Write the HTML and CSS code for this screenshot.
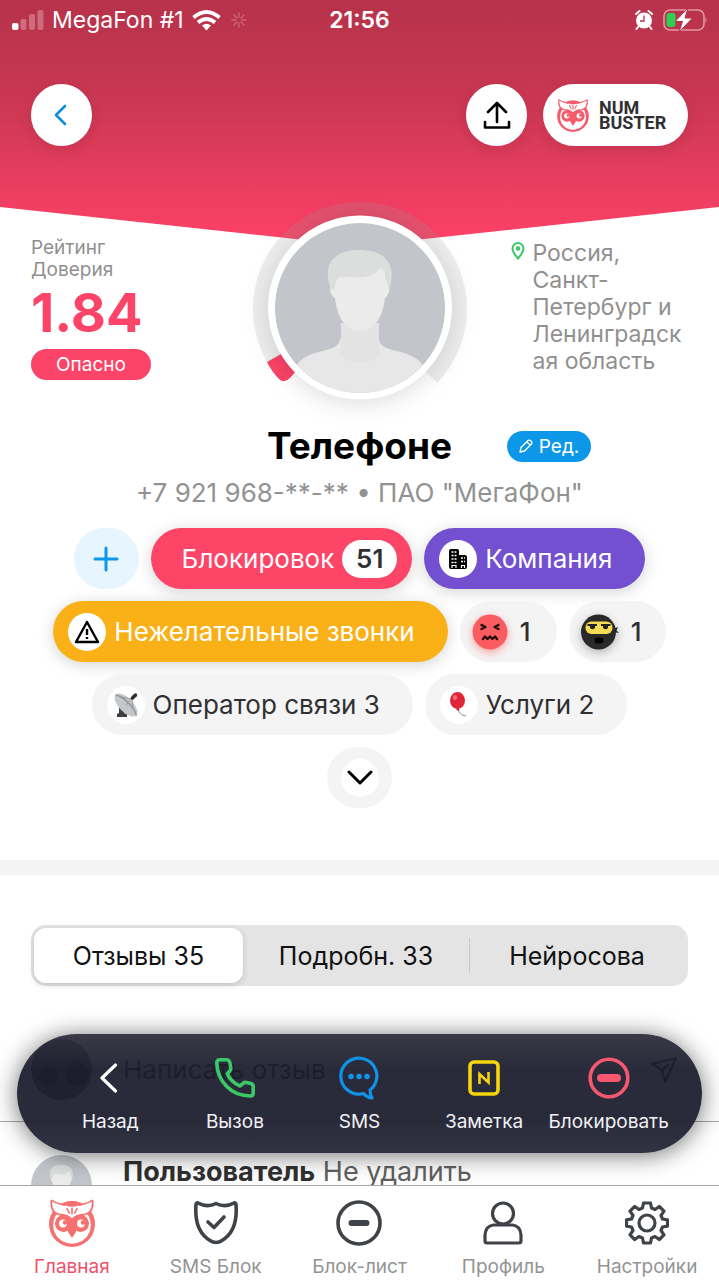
FILE: index.html
```html
<!DOCTYPE html>
<html lang="ru">
<head>
<meta charset="utf-8">
<meta name="viewport" content="width=device-width, initial-scale=1">
<title>NumBuster</title>
<link rel="stylesheet" href="styles.css">
</head>
<body>
<svg class="defs" aria-hidden="true">
  <symbol id="owl" viewBox="0 0 46 48">
    <circle cx="23" cy="25" r="23" fill="currentColor"/>
    <circle cx="23" cy="26" r="18.800" fill="#fff"/>
    <path d="M2 .5C6 5 11 5 16 6.500h14C35 5 40 5 44 .5 45.500 8 43 14 36 15.500c-6 0-10 1-13 4.500C20 16.500 16 15.500 10 15.500 3 14 .5 8 2 .5Z" fill="#fff"/>
    <path d="M2.500 1C1.500 9 4 14 10 15.500q9 .5 13 5 4-4.500 13-5C42 14 44.500 9 43.500 1" fill="none" stroke="currentColor" stroke-width="1.800"/>
    <path d="M2.500 1C7 5 12 4.500 16 6.500M43.500 1C39 5 34 4.500 30 6.500" fill="none" stroke="currentColor" stroke-width="1.600"/>
    <path d="M12 5Q23-1 34 5 29 6 26 7.500H20Q17 6 12 5Z" fill="currentColor"/>
    <path d="M18 9.500l2.200 4.500M23 9v6M28 9.500l-2.200 4.500" stroke="currentColor" stroke-width="1.600" stroke-linecap="round"/>
    <circle cx="14.500" cy="24.500" r="8.500" fill="currentColor"/><circle cx="31.500" cy="24.500" r="8.500" fill="currentColor"/>
    <path d="M19 19h8v14l-4 6-4-6z" fill="currentColor"/>
    <circle cx="14" cy="24.500" r="3.900" fill="#fff"/><circle cx="32" cy="24.500" r="3.900" fill="#fff"/>
    <circle cx="16" cy="23.500" r="2.200" fill="currentColor"/><circle cx="34" cy="23.500" r="2.200" fill="currentColor"/>
  </symbol>
  <symbol id="person" viewBox="0 0 170 170">
    <clipPath id="disc"><circle cx="85" cy="85" r="85"/></clipPath>
    <g clip-path="url(#disc)">
      <rect width="170" height="170" fill="#c2c6ca"/>
      <path d="M17 170c0-24 4-33 20-39 15-5 27-5 28-15h39c1 10 13 10 28 15 16 6 21 15 21 39z" fill="#e7e7e7"/>
      <path d="M66 100h38v28c0 15-38 15-38 0z" fill="#e4e3e3"/>
      <path d="M59 57c0-16 11-21 26-21s26 5 26 21c6 2 4 15-1 18-2 18-10 33-25 33S62 93 60 75c-6-3-7-16-1-18z" fill="#ebebeb"/>
      <path d="M56 67C46 40 60 27 84 27c28 0 38 15 30 41l-4-18-4-6C94 61 74 51 64 55c-3 2-4 5-4 11z" fill="#dcdddd"/>
    </g>
  </symbol>
</svg>

<div class="screen">
  <main class="content">
    <header class="top">
      <div class="status">
        <div class="status-side">
          <svg width="32" height="20" viewBox="0 0 32 20" fill="#fff"><rect y="13" width="6.500" height="7" rx="2"/><g opacity=".28"><rect x="8.500" y="9" width="6" height="11" rx="2"/><rect x="17" y="4" width="6" height="16" rx="2"/><rect x="25.500" y="0" width="6" height="20" rx="2"/></g></svg>
          <span>MegaFon #1</span>
          <svg class="wifi" width="29" height="21" viewBox="0 0 29 21" fill="none" stroke="#fff" stroke-width="3.800"><path d="M1.500 7.500Q14.500-3.500 27.500 7.500"/><path d="M6 12.500Q14.500 5.500 23 12.500"/><path d="M10 15.500Q14.500 12 19 15.500L14.500 20.500z" fill="#fff" stroke="none"/></svg>
          <svg class="spinner" width="16" height="16" viewBox="0 0 16 16" stroke="#fff" stroke-width="1.300" stroke-linecap="round"><path d="M8 1v4M8 11v4M1 8h4M11 8h4M3 3l3 3M10 10l3 3M3 13l3-3M10 6l3-3"/></svg>
        </div>
        <time>21:56</time>
        <div class="status-side status-end">
          <svg width="18" height="20" viewBox="0 0 18 20"><circle cx="9" cy="10.500" r="8" fill="#fff"/><path d="M3 17l-1.500 2M15 17l1.500 2M1 4l3.500-3M17 4l-3.500-3" stroke="#fff" stroke-width="2" stroke-linecap="round"/><path d="M9 5.500v5.500H5" fill="none" stroke="#b8324a" stroke-width="1.300"/></svg>
          <svg width="44" height="24" viewBox="0 0 44 24"><rect x="1" y="2" width="40" height="20" rx="6" fill="none" stroke="#e497a4" stroke-width="1.600"/><rect x="3.500" y="5" width="9" height="14" rx="3" fill="#2bd153"/><path d="M42.500 9v6q2-3 0-6z" fill="#e497a4"/><path d="M25 0L12 13.500h7.500L16 24l13.500-14H22z" fill="#fff" stroke="#b8324a" stroke-width="1"/></svg>
        </div>
      </div>
      <div class="toolbar">
        <button class="round" aria-label="Назад"><svg width="16" height="22" viewBox="0 0 16 22" fill="none" stroke="#0c8fdc" stroke-width="2.600" stroke-linecap="round" stroke-linejoin="round"><path d="M11 2L2 11l9 9"/></svg></button>
        <button class="round push" aria-label="Поделиться"><svg width="28" height="30" viewBox="0 0 28 30" fill="none" stroke="#000" stroke-width="2.600" stroke-linecap="round" stroke-linejoin="round"><path d="M14 22V3M5 12l9-9 9 9M2 22v5.500h24V22"/></svg></button>
        <a class="brand" href="#"><svg class="owl" width="32" height="33"><use href="#owl"/></svg><span class="wordmark">NUM BUSTER</span></a>
      </div>
    </header>

    <section class="profile">
      <div class="rating">
        <div class="caption">Рейтинг<br>Доверия</div>
        <div class="score">1.84</div>
        <div class="badge">Опасно</div>
      </div>
      <svg class="photo" width="214" height="214" viewBox="-107 -107 214 214">
        <path d="M-84 48.500A97 97 0 1 1 70 67" fill="none" stroke="#a0a0a030" stroke-width="20"/>
        <path d="M-93 53L-79 45L-62 60L-70 69Q-76 75-81 70-88 63-93 53Z" fill="#fb4467"/>
        <circle class="photo-rim" cy="-1.500" r="92" fill="#fff"/>
        <use href="#person" x="-85" y="-86" width="170" height="170"/>
      </svg>
      <div class="place">
        <svg width="14" height="18" viewBox="0 0 14 18" fill="none" stroke="#36c864" stroke-width="2"><path d="M7 16.500C4 13 1.500 10 1.500 6.500a5.500 5.500 0 0 1 11 0C12.500 10 10 13 7 16.500z"/><circle cx="7" cy="6.500" r="1.300"/></svg>
        <span>Россия,<br>Санкт-<br>Петербург и<br>Ленинградск<br>ая область</span>
      </div>
    </section>

    <section class="identity">
      <div class="name-row">
        <h1>Телефоне</h1>
        <button class="edit"><svg width="14" height="14" viewBox="0 0 14 14" fill="none" stroke="#fff" stroke-width="1.300" stroke-linejoin="round"><path d="M1 13l1-4.500 7-7q1.500-1 3 .5t.5 3l-7 7zM8 3l3 3"/></svg>Ред.</button>
      </div>
      <p class="number">+7 921 968-**-** • ПАО "МегаФон"</p>
    </section>

    <section class="chips">
      <button class="chip add" aria-label="Добавить"><svg width="26" height="26" viewBox="0 0 26 26" stroke="#0c97e8" stroke-width="3" stroke-linecap="round"><path d="M13 2v22M2 13h22"/></svg></button>
      <button class="chip blocks">Блокировок <b class="count">51</b></button>
      <button class="chip company"><i class="dot"><svg width="22" height="22" viewBox="0 0 22 22"><path d="M2 3q0-2 2-2h6q2 0 2 2v4h6q2 0 2 2v10q0 2-2 2H4q-2 0-2-2z" fill="#000"/><path d="M4.500 4h5M4.500 7.500h5M4.500 11h5M4.500 14.500h5M14 10h4M14 13.500h4" stroke="#fff" stroke-width="1.600" stroke-dasharray="2 1"/><path d="M5 20v-2.500h4V20M14.500 20v-2.500h3V20" fill="none" stroke="#fff" stroke-width="1.200"/></svg></i>Компания</button>
      <button class="chip spam"><i class="dot"><svg width="26" height="24" viewBox="0 0 26 24" fill="none" stroke="#000" stroke-width="2.400" stroke-linejoin="round"><path d="M13 2L24 22H2zM13 9v6M13 17v2"/></svg></i>Нежелательные звонки</button>
      <button class="chip mood"><svg class="face" width="36" height="36" viewBox="0 0 36 36"><circle cx="18" cy="18" r="17.500" fill="#fb5c5f"/><path d="M9.500 11l4 2-4 2M26.500 11l-4 2 4 2M11 25l2-2.500 2.500 2.500 2.500-2.500 2.500 2.500 2.500-2.500 2 2.500" fill="none" stroke="#240c0e" stroke-width="2.400" stroke-linecap="round" stroke-linejoin="round"/></svg>1</button>
      <button class="chip mood"><svg class="face dark" width="38" height="36" viewBox="0 0 38 36"><path d="M32 15l5-2-1.500 3.500L38 19l-6-1z" fill="#222"/><circle cx="17.500" cy="18" r="17.500" fill="#292929"/><rect x="4.500" y="7.500" width="27" height="12.500" rx="6" fill="#f4db52"/><path d="M6.500 11h9.500M20 11h9.500" stroke="#222" stroke-width="2"/><path d="M9 11h5v3q-2.500 2.500-5 0zM22 11h5v3q-2.500 2.500-5 0z" fill="#222"/><rect x="13.500" y="23.500" width="9" height="6" rx="3" fill="#000"/></svg>1</button>
      <button class="chip tag"><i class="dot"><svg width="24" height="26" viewBox="0 0 24 26"><path d="M5 13l6 3-1 5 3 1v3H3v-3l2-1z" fill="#3c4044"/><ellipse cx="12" cy="13" rx="14.500" ry="7" transform="rotate(45 12 13)" fill="#c5c8cb"/><path d="M1.500 3C9 4 20 15 22.500 23.500" fill="none" stroke="#92969b" stroke-width="1.500"/><path d="M12 13l7-8M7 5l11 2M19 17l-1-10" stroke="#94979b" stroke-width="1"/><path d="M18.500 6l3-3" stroke="#2d3033" stroke-width="3.500" stroke-linecap="round"/></svg></i>Оператор связи 3</button>
      <button class="chip tag"><i class="dot"><svg width="20" height="26" viewBox="0 0 20 26"><path d="M9 18c1 3 3 5 8 6" fill="none" stroke="#888" stroke-width="1"/><path d="M9 16l2 2.500-4-.5z" fill="#b51824"/><ellipse cx="8.500" cy="8.500" rx="7.500" ry="8.500" fill="#df2638"/><ellipse cx="6" cy="5.500" rx="2" ry="2.500" fill="#f0707a"/></svg></i>Услуги 2</button>
    </section>
    <div class="expand">
      <button class="chip more" aria-label="Показать ещё"><i class="dot"><svg width="26" height="18" viewBox="0 0 26 18" fill="none" stroke="#000" stroke-width="3" stroke-linecap="round" stroke-linejoin="round"><path d="M2 3l11 11L24 3"/></svg></i></button>
    </div>

    <section class="feed">
      <div class="tabs" role="tablist">
        <button role="tab" aria-selected="true">Отзывы 35</button>
        <button role="tab" aria-selected="false">Подробн. 33</button>
        <button class="ruled" role="tab" aria-selected="false">Нейросова</button>
      </div>
      <label class="composer">
        <svg width="61" height="61" viewBox="0 0 61 61"><circle cx="30.500" cy="30.500" r="30.500" fill="#3c3d46"/><circle cx="18" cy="38" r="10" fill="#000"/><circle cx="46" cy="35" r="12" fill="#000"/></svg>
        <input type="text" placeholder="Написать отзыв" aria-label="Написать отзыв">
        <svg width="28" height="28" viewBox="0 0 28 28" fill="none" stroke="#000" stroke-width="2.400" stroke-linejoin="round"><path d="M2 8l24-6-11 24-3-12zM12 14l7-6"/></svg>
      </label>
      <article class="review">
        <svg width="61" height="61"><use href="#person"/></svg>
        <p><b>Пользователь</b> Не удалить</p>
      </article>
    </section>

    <div class="actions">
      <button><svg width="20" height="32" viewBox="0 0 20 32" fill="none" stroke="#fff" stroke-width="3.200" stroke-linecap="round" stroke-linejoin="round"><path d="M15.500 3L2 16l13.500 13"/></svg>Назад</button>
      <button><svg width="40" height="40" viewBox="0 0 40 40" fill="none" stroke="#3bc967" stroke-width="3.600" stroke-linejoin="round"><path d="M5 1.800h6.500q2.500 0 3.300 2.500l1 5.500q.4 2-1.200 3.500l-2.300 2.400q3.500 8 12.500 12.300l3.300-2.700q1.400-1.200 3.300-.8l4.500 1q2.300.6 2.300 3v6.700q0 2.800-3 2.800Q21 38 11.500 28.300 2 18.500 1.800 5 1.800 1.800 5 1.800z"/></svg>Вызов</button>
      <button><svg width="40" height="44" viewBox="0 0 40 44" fill="none" stroke="#0e93e8" stroke-width="3.200" stroke-linecap="round" stroke-linejoin="round"><path d="M33 42q-6-1-8.500-4.500A18 18 0 1 1 36 28q-2 4-5 6 0 5 2 8z"/><path d="M12 20.500h.1M20 20.500h.1M28 20.500h.1" stroke-width="5.500"/></svg>SMS</button>
      <button><svg width="32" height="36" viewBox="0 0 32 36" fill="none" stroke="#f5d50d" stroke-width="3.600"><rect x="2" y="2" width="28" height="32" rx="4"/><path d="M11.500 24V14l9 8.500V12" stroke-width="2.600"/></svg>Заметка</button>
      <button><svg width="42" height="42" viewBox="0 0 42 42" fill="none" stroke="#f75870" stroke-width="3.600"><circle cx="21" cy="21" r="18.800"/><path d="M13 21h16" stroke-width="8" stroke-linecap="round"/></svg>Блокировать</button>
    </div>
  </main>

  <nav class="tabbar">
    <a class="active" href="#"><svg class="owl" width="46" height="48"><use href="#owl"/></svg>Главная</a>
    <a href="#"><svg width="44" height="44" viewBox="0 0 44 44" fill="none" stroke="#3f4348" stroke-width="3.600" stroke-linecap="round" stroke-linejoin="round"><path d="M4 2q9 5 18 0.500 9 4.500 18-.5 2-.5 2 2 2 26-14 35.500-6 4-12 0Q0 30 2 4q0-2.500 2-2z"/><path d="M14 21l6 5.500L30 16"/></svg>SMS Блок</a>
    <a href="#"><svg width="46" height="46" viewBox="0 0 46 46" fill="none" stroke="#3f4348" stroke-width="3.600"><circle cx="23" cy="23" r="21"/><path d="M15.500 23h15" stroke-width="6" stroke-linecap="round"/></svg>Блок-лист</a>
    <a href="#"><svg width="40" height="44" viewBox="0 0 40 44" fill="none" stroke="#3f4348" stroke-width="3.200" stroke-linejoin="round"><circle cx="20" cy="12.500" r="10.500"/><path d="M10.500 24h19q8 1 8.500 10v6q0 2-2 2H4q-2 0-2-2v-6q.5-9 8.500-10z"/></svg>Профиль</a>
    <a href="#"><svg width="44" height="44" viewBox="-22 -22 44 44" fill="none" stroke="#3f4348" stroke-width="3.200" stroke-linejoin="round"><circle r="8"/><path d="M-3.500-20h7l1 5 3.500 1.500 4.300-3 4.700 4.700-3 4.300 1.500 3.500 5 .8v6.400l-5 .8-1.500 3.500 3 4.300-4.700 4.700-4.300-3-3.500 1.500-1 5h-7l-1-5L-8 13.500l-4.300 3-4.700-4.700 3-4.300L-15.500 4l-5-.8v-6.400l5-.8 1.500-3.500-3-4.300 4.700-4.700 4.300 3 3.500-1.500z"/></svg>Настройки</a>
  </nav>
</div>
</body>
</html>
```

FILE: styles.css
```css
* { box-sizing: border-box; }

body {
  margin: 0;
  background: #fff;
  color: #303033;
  font-family: Inter, "Liberation Sans", sans-serif;
}

button, input { font: inherit; color: inherit; border: 0; padding: 0; background: none; }
button { cursor: pointer; }
a { color: inherit; text-decoration: none; }
svg { display: block; flex: none; }
.defs { position: absolute; width: 0; height: 0; }

.screen { height: 100vh; display: flex; flex-direction: column; }
.content { position: relative; flex: 1; min-height: 0; overflow: hidden; }

/* Header */
.top { position: relative; height: 202px; }
.top::before {
  content: "";
  position: absolute;
  inset: 0 0 auto;
  height: 246px;
  background: linear-gradient(#b6324a, #ca3752 40%, #ff4268);
  clip-path: polygon(0 0, 100% 0, 100% 207px, 50% 100%, 0 207px);
}
.status, .toolbar { position: relative; display: flex; align-items: center; }
.status { height: 40px; padding: 0 12px; color: #fff; font-size: 23px; }
.status time { font-weight: 600; }
.status-side { flex: 1; display: flex; align-items: center; gap: 8px; }
.status-end { justify-content: flex-end; gap: 10px; }
.spinner { opacity: .25; margin-left: 2px; }
.toolbar { padding: 44px 31px 0; gap: 16px; }
.round, .brand {
  height: 62px;
  display: flex;
  align-items: center;
  justify-content: center;
  background: #fff;
  border-radius: 31px;
  box-shadow: 0 4px 14px #00000018;
}
.round { width: 61px; }
.push { margin-left: auto; }
.brand {
  gap: 10px;
  width: 145px;
  padding: 0 22px 0 14px;
  justify-content: flex-start;
  font: 700 18px/15px Roboto, sans-serif;
}
.wordmark { width: min-content; }
.owl { color: #f55b6b; }

/* Rating, photo, location */
.profile {
  position: relative;
  display: grid;
  grid-template-columns: 1fr 214px 1fr;
  padding: 0 31px;
}
.rating { padding-top: 35px; }
.caption { color: #8f8f8f; font-size: 19px; line-height: 22px; }
.score { color: #fb4467; font-size: 54px; line-height: 64px; font-weight: 700; }
.badge {
  width: 120px;
  margin-top: 4px;
  border-radius: 16px;
  background: #fb4467;
  color: #fff;
  font-size: 19px;
  line-height: 31px;
  text-align: center;
}
.photo { overflow: visible; }
.photo-rim { filter: drop-shadow(0 4px 12px #00000022); }
.place {
  display: flex;
  align-items: flex-start;
  gap: 8px;
  padding: 38px 0 0 44px;
  color: #909090;
  font-size: 23px;
  line-height: 27px;
  white-space: nowrap;
}
.place svg { margin-top: 2px; }

/* Name and number */
.name-row {
  display: grid;
  grid-template-columns: 1fr auto 1fr;
  align-items: center;
  margin-top: 6px;
}
.name-row h1 { grid-column: 2; margin: 0; color: #000; font-size: 37px; line-height: 48px; }
.edit {
  justify-self: start;
  display: flex;
  align-items: center;
  justify-content: center;
  gap: 6px;
  width: 84px;
  height: 31px;
  margin-left: 55px;
  border-radius: 16px;
  background: #0c97e8;
  color: #fff;
  font-size: 19px;
}
.number { margin: 6px 0 18px; color: #929292; font-size: 26px; line-height: 34px; text-align: center; }

/* Chips */
.chips {
  display: flex;
  flex-wrap: wrap;
  justify-content: center;
  gap: 12px;
  padding: 0 40px;
}
.expand { display: flex; justify-content: center; padding: 12px 0 52px; }
.chip {
  display: flex;
  align-items: center;
  gap: 8px;
  height: 61px;
  padding: 0 33px 0 15px;
  border-radius: 31px;
  background: #f4f4f4;
  font-size: 26px;
  white-space: nowrap;
}
.dot {
  display: grid;
  place-items: center;
  width: 38px;
  height: 38px;
  border-radius: 50%;
  background: #fff;
}
.blocks, .company, .spam { color: #fff; box-shadow: 0 3px 16px #0000002c; }
.blocks { background: #fd4568; padding: 0 15px 0 31px; }
.company { background: #7250d0; }
.spam { background: #fab017; }
.add { width: 65px; padding: 0; justify-content: center; background: #e7f5ff; }
.more { width: 65px; padding: 0; justify-content: center; }
.mood { width: 97px; padding: 0 0 0 12px; gap: 12px; font-weight: 500; }
.face { border-radius: 50%; filter: drop-shadow(0 3px 4px #fb5c5f88); }
.dark { border-radius: 0; filter: drop-shadow(0 3px 5px #00000044); }
.count {
  width: 55px;
  border-radius: 19px;
  background: #fff;
  color: #303033;
  font-weight: 600;
  line-height: 38px;
}

/* Reviews */
.feed { border-top: 15px solid #f3f3f3; padding-top: 50px; }
.tabs {
  display: grid;
  grid-template-columns: 209px 226px 1fr;
  margin: 0 31px;
  padding: 3px;
  border-radius: 15px;
  background: #e4e4e4;
  color: #111;
  font-size: 25px;
}
.tabs button { height: 55px; border-radius: 12px; }
.tabs [aria-selected="true"] { background: #fff; box-shadow: 0 2px 6px #00000028; }
.tabs .ruled { position: relative; }
.ruled::before {
  content: "";
  position: absolute;
  inset: 10px auto 10px 0;
  width: 1px;
  background: #c8c8cc;
}
.composer {
  display: flex;
  align-items: center;
  gap: 31px;
  padding: 53px 41px 21px 31px;
  border-bottom: 1px solid #a5a5a5;
}
.composer input { flex: 1; min-width: 0; font-size: 26px; }
.composer input::placeholder { color: #000; opacity: 1; }
.review { display: flex; gap: 31px; padding: 33px 31px; }
.review p { margin: 0; color: #606060; font-size: 27px; line-height: 34px; }
.review b { color: #303030; }

/* Floating call actions */
.actions {
  position: absolute;
  inset: auto 17px 32px;
  display: grid;
  grid-template-columns: repeat(5, 1fr);
  height: 119px;
  padding: 0 31px;
  border-radius: 60px;
  background: linear-gradient(#2f2f3df2, #1e1f2ff2 30%, #1e1f2ff2 70%, #272838f2);
  box-shadow: 0 2px 24px #00000090;
}
.actions button {
  display: grid;
  grid-template-rows: 44px 24px;
  align-content: center;
  place-items: center;
  gap: 10px;
  padding-top: 2px;
  min-width: 0;
  color: #f1f1f5;
  font-size: 19px;
  white-space: nowrap;
}

/* Bottom navigation */
.tabbar {
  display: grid;
  grid-template-columns: repeat(5, 1fr);
  height: 95px;
  border-top: 1px solid #a5a5a5;
  background: #fff;
}
.tabbar a {
  display: grid;
  grid-template-rows: 50px 24px;
  align-content: start;
  place-items: center;
  gap: 6px;
  padding-top: 12px;
  color: #939393;
  font-size: 19px;
  white-space: nowrap;
}
.tabbar .active { color: #f4506a; }
.tabbar .owl { color: #f57070; }
```
